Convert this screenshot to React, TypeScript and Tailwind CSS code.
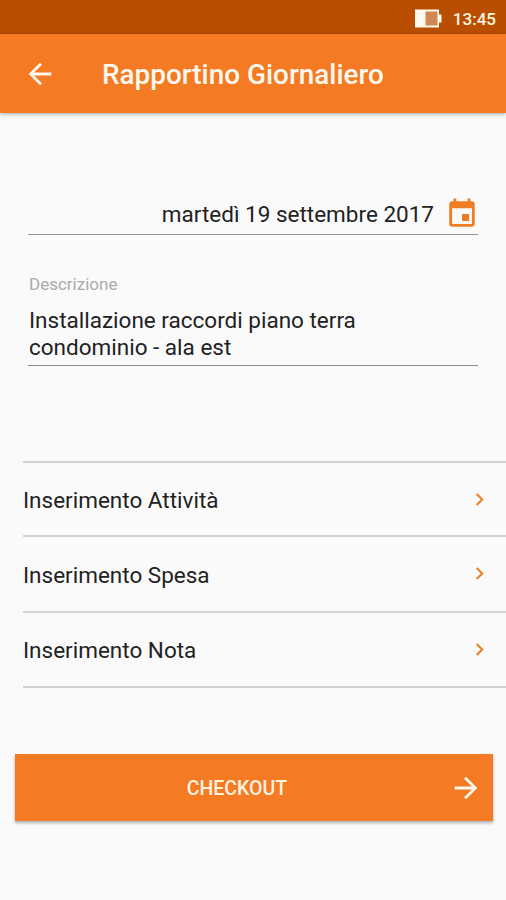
const menuItems = ["Inserimento Attività", "Inserimento Spesa", "Inserimento Nota"];

function BatteryIcon() {
  return (
    <svg width="28" height="20" viewBox="0 0 28 20">
      <path d="M1 0.5h24v5h2.500v8H25v5H1z" fill="#fff8ee" />
      <path d="M11.500 2.500H23.500v14H11.500z" fill="#cf8850" />
    </svg>
  );
}

function ArrowBackIcon() {
  return (
    <svg width="34" height="34" viewBox="0 0 24 24" fill="#fff8ee">
      <path d="M20 11H7.83l5.59-5.59L12 4l-8 8 8 8 1.41-1.41L7.83 13H20v-2z" />
    </svg>
  );
}

function ArrowForwardIcon() {
  return (
    <svg width="34" height="34" viewBox="0 0 24 24" fill="#fff8ee">
      <path d="M12 4l-1.41 1.41L16.17 11H4v2h12.17l-5.58 5.59L12 20l8-8z" />
    </svg>
  );
}

function EventIcon() {
  return (
    <svg width="34" height="34" viewBox="0 0 24 24" fill="#ee7d23">
      <path d="M17 12h-5v5h5v-5zM16 1v2H8V1H6v2H5c-1.11 0-1.99.9-1.99 2L3 19c0 1.1.89 2 2 2h14c1.1 0 2-.9 2-2V5c0-1.1-.9-2-2-2h-1V1h-2zm3 18H5V8h14v11z" />
    </svg>
  );
}

function ChevronIcon() {
  return (
    <svg width="25" height="25" viewBox="0 0 24 24" fill="#e88128">
      <path d="M10 6L8.59 7.41 13.17 12l-4.58 4.59L10 18l6-6z" />
    </svg>
  );
}

export default function App() {
  return (
    <div className="flex h-[900px] w-[506px] flex-col overflow-hidden bg-[#fafafa] font-[Roboto,sans-serif] text-[#222]">
      <div className="flex h-[34px] shrink-0 items-center justify-end gap-[11px] bg-[#b94e00] pt-[3px] pr-[10px] text-[#fff3e6]">
        <BatteryIcon />
        <span className="text-[17px] font-medium leading-5">13:45</span>
      </div>

      <header className="flex h-[79px] shrink-0 items-center bg-[#f47a24] pl-[23px] text-[#fff8ee] shadow-[0_1px_4px_rgba(0,0,0,0.35)]">
        <ArrowBackIcon />
        <h1 className="ml-[45px] pt-[3px] text-[27.9px] font-medium leading-8">
          Rapportino Giornaliero
        </h1>
      </header>

      <main className="flex flex-col">
        <div className="mr-[28px] ml-[28px] mt-[83px] flex h-[39px] items-start justify-end border-b border-[#949494]">
          <span className="pt-[5px] text-[22.5px] leading-[27px]">
            martedì 19 settembre 2017
          </span>
          <span className="ml-[11px] mr-[-1px] mt-[1px]">
            <EventIcon />
          </span>
        </div>

        <div className="mr-[28px] ml-[28px] mt-[38px] h-[93px] border-b border-[#888]">
          <label className="block pl-px text-[17px] leading-[22px] text-[#aaa]">
            Descrizione
          </label>
          <p className="mt-[12px] pl-px text-[22.5px] leading-[27px]">
            Installazione raccordi piano terra
            <br />
            condominio - ala est
          </p>
        </div>

        <ul className="ml-[23px] mt-[95px] border-t-2 border-[#d2d2d2]">
          {menuItems.map((item) => (
            <li
              key={item}
              className="flex h-[75.5px] items-center justify-between border-b-2 border-[#d2d2d2] pr-[14px] text-[22.5px] first:h-[74px]"
            >
              <span className="pt-[4px]">{item}</span>
              <ChevronIcon />
            </li>
          ))}
        </ul>

        <button className="mr-[13px] ml-[15px] mt-[66px] flex h-[67px] items-center bg-[#f47a24] pr-[10px] text-[#fff3e0] shadow-[0_2px_3px_rgba(0,0,0,0.3)]">
          <span className="flex-1 pl-[10px] pt-[3px] text-center text-[19.5px] font-medium">
            CHECKOUT
          </span>
          <ArrowForwardIcon />
        </button>
      </main>
    </div>
  );
}
